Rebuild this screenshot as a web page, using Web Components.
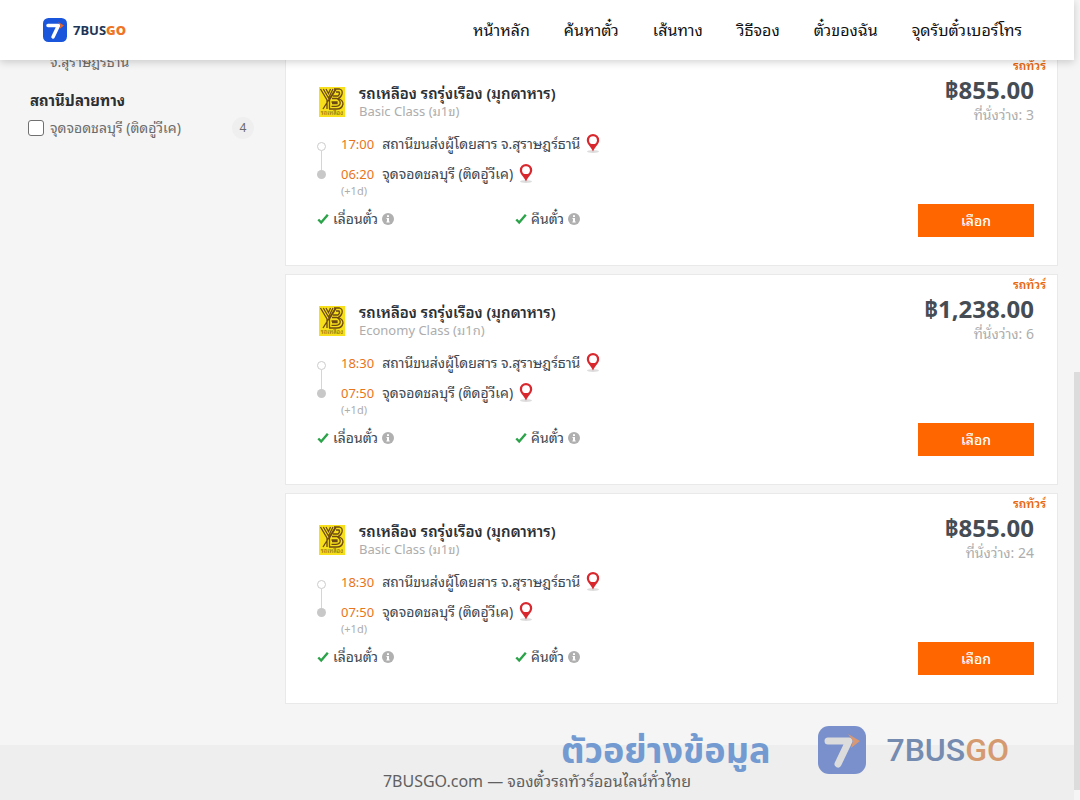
<!DOCTYPE html>
<html lang="th">
<head>
<meta charset="utf-8">
<meta name="viewport" content="width=device-width, initial-scale=1">
<title>7BUSGO</title>
<style>
html { scrollbar-width: none; }
body { margin: 0; background: #f5f5f5; color: #40464d; font: 14px/20px "Noto Sans", "Noto Sans Thai Looped", Loma, Waree, Garuda, "Noto Sans Thai", sans-serif; }
</style>
</head>
<body>
<app-shell>
  <site-header slot="header">
    <a href="#home">หน้าหลัก</a>
    <a href="#search">ค้นหาตั๋ว</a>
    <a href="#routes">เส้นทาง</a>
    <a href="#how">วิธีจอง</a>
    <a href="#tickets">ตั๋วของฉัน</a>
    <a href="#pickup">จุดรับตั๋วเบอร์โทร</a>
  </site-header>
  <filter-panel slot="filters" count="4">
    <span slot="origin">จ.สุราษฎร์ธานี</span>
    <span slot="heading">สถานีปลายทาง</span>
    <span slot="option">จุดจอดชลบุรี (ติดอู่วีเค)</span>
  </filter-panel>
  <trip-card grade="Basic Class (ม1ข)" depart="17:00" arrive="06:20" price="฿855.00" seats="3">รถเหลือง รถรุ่งเรือง (มุกดาหาร)</trip-card>
  <trip-card grade="Economy Class (ม1ก)" depart="18:30" arrive="07:50" price="฿1,238.00" seats="6">รถเหลือง รถรุ่งเรือง (มุกดาหาร)</trip-card>
  <trip-card grade="Basic Class (ม1ข)" depart="18:30" arrive="07:50" price="฿855.00" seats="24">รถเหลือง รถรุ่งเรือง (มุกดาหาร)</trip-card>
  <site-footer slot="footer">7BUSGO.com — จองตั๋วรถทัวร์ออนไลน์ทั่วไทย</site-footer>
  <sample-mark slot="mark">ตัวอย่างข้อมูล</sample-mark>
</app-shell>
<script>
class BaseElement extends HTMLElement {
  connectedCallback() {
    if (!this.shadowRoot) this.attachShadow({ mode: 'open' }).innerHTML = this.render();
  }
  attr(name) { return this.getAttribute(name) || ''; }
}

customElements.define('app-shell', class extends BaseElement {
  render() { return `
    <style>
      :host { display: block; position: relative; padding-right: 6px; overflow: hidden; }
      .columns { display: grid; grid-template-columns: 285px minmax(0, 1fr); padding-right: 16px; margin-top: -5px; }
      .list { display: flex; flex-direction: column; gap: 8px; }
      .rail { position: absolute; right: 0; top: 0; bottom: 0; width: 6px; background: #f5f5f5; }
      .thumb { position: absolute; inset: 372px 0 10px 0; background: #dcdcdc; }
    </style>
    <slot name="header"></slot>
    <div class="columns">
      <slot name="filters"></slot>
      <main class="list"><slot></slot></main>
    </div>
    <slot name="footer"></slot>
    <slot name="mark"></slot>
    <div class="rail"><div class="thumb"></div></div>`; }
});

customElements.define('brand-icon', class extends BaseElement {
  render() { return `
    <style>:host { display: block; flex: none; width: 24px; height: 24px; } svg { display: block; width: 100%; height: 100%; }</style>
    <svg viewBox="0 0 48 48" aria-hidden="true">
      <rect width="48" height="48" rx="11" fill="var(--brand-blue, #1a56db)"/>
      <path d="M10 15H31L20 38" fill="none" stroke="var(--brand-white, #fff)" stroke-width="7" stroke-linecap="round" stroke-linejoin="round"/>
      <path d="M30 8L42 15L33 22L35 15Z" fill="var(--brand-orange, #f0641e)"/>
    </svg>`; }
});

customElements.define('site-header', class extends BaseElement {
  render() { return `
    <style>
      :host { display: flex; align-items: center; justify-content: space-between; position: relative; z-index: 2;
        height: 60px; padding: 0 52px 0 43px; background: #fff; box-shadow: 0 2px 8px rgba(0,0,0,.18); box-sizing: border-box; }
      .brand { display: flex; align-items: center; gap: 6px; color: #1d3557; font: 700 13px/20px "Noto Sans", sans-serif; text-decoration: none; }
      b { color: #ee7526; }
      nav { display: flex; gap: 34px; font-size: 16px; line-height: 24px; }
      ::slotted(a) { color: #111; text-decoration: none; white-space: nowrap; }
    </style>
    <a class="brand" href="#home"><brand-icon></brand-icon><span>7BUS<b>GO</b></span></a>
    <nav><slot></slot></nav>`; }
});

customElements.define('filter-panel', class extends BaseElement {
  render() { return `
    <style>
      :host { display: block; padding: 0 31px 0 28px; color: #6b6b6b; }
      .origin { padding-left: 22px; line-height: 14px; }
      h2 { margin: 20px 0 6px 2px; font-size: 15px; line-height: 22px; color: #2b2f33; }
      label { display: flex; align-items: center; gap: 6px; line-height: 20px; }
      input { appearance: none; flex: none; box-sizing: border-box; width: 16px; height: 16px; margin: 0; border: 1px solid #707070; border-radius: 3px; background: #fff; }
      .count { margin-left: auto; width: 22px; border-radius: 11px; background: #efefef; text-align: center; font-size: 12px; line-height: 22px; }
    </style>
    <div class="origin"><slot name="origin"></slot></div>
    <h2><slot name="heading"></slot></h2>
    <label><input type="checkbox"><slot name="option"></slot><span class="count">${this.attr('count')}</span></label>`; }
});

customElements.define('operator-logo', class extends BaseElement {
  render() { return `
    <style>:host { display: block; width: 26px; height: 30px; } svg { display: block; }</style>
    <svg width="26" height="30" viewBox="0 0 26 30" aria-hidden="true">
      <rect width="26" height="30" fill="#f7e01b"/>
      <g fill="none" stroke="#6e4a12" stroke-width="1.3">
        <path d="M1.500 2L8 13V22M4.300 2L9.500 11L14 2M7 2L9.500 6.500L11.500 2M4 22L16.500 2M10.500 22V13L17 2.500"/>
        <path d="M15 2H20.500Q24 3 23 7Q22 10.500 19 11.500Q24 13 24 17Q23 22 18 22H10M17 5H20Q21.500 7 19 9H14M13 11.500H18Q22 14 21 17Q20 19.300 17 19.300H12.500M12.500 15H18V16.500H13"/>
      </g>
      <text x="13" y="28" text-anchor="middle" font-size="6" fill="#8a6512">รถเหลือง</text>
    </svg>`; }
});

customElements.define('map-pin', class extends BaseElement {
  render() { return `
    <style>:host { display: block; } button { display: block; padding: 0; border: 0; background: none; } svg { display: block; }</style>
    <button type="button" aria-label="แผนที่"><svg width="14" height="20" viewBox="0 0 14 20">
      <ellipse cx="7" cy="17.500" rx="6" ry="1.500" fill="#ddd"/>
      <path d="M7 0A6.200 6.200 0 0 0 .8 6.200C.8 10 5 12.500 7 17.500C9 12.500 13.200 10 13.200 6.200A6.200 6.200 0 0 0 7 0Z" fill="#d9272e"/>
      <circle cx="7" cy="6.200" r="3.900" fill="#fff"/>
    </svg></button>`; }
});

customElements.define('trip-perk', class extends BaseElement {
  render() { return `
    <style>:host { display: flex; align-items: center; gap: 4px; line-height: 20px; } svg { display: block; flex: none; }</style>
    <svg width="12" height="12" viewBox="0 0 12 12" aria-hidden="true"><path d="M1.300 6.500L4.200 9.500L10.800 1.800" fill="none" stroke="#2ba349" stroke-width="2.400"/></svg>
    <slot></slot>
    <svg width="12" height="12" viewBox="0 0 12 12" aria-hidden="true"><circle cx="6" cy="6" r="6" fill="#b0b0b0"/><path d="M5 2.300h2v1.600H5zM4.500 5H7v3.500h.7v1H4.400v-1H5V6h-.5z" fill="#fff"/></svg>`; }
});

customElements.define('trip-card', class extends BaseElement {
  render() { return `
    <style>
      :host { display: flex; justify-content: space-between; position: relative; box-sizing: border-box;
        padding: 28px 23px 28px 31px; background: #fff; border: 1px solid #e9e9e9; }
      .kind { position: absolute; top: 0; right: 11px; height: 14px; overflow: hidden; color: #e8670c; font-size: 12px; line-height: 19px; font-weight: 600; }
      .head { display: flex; align-items: center; gap: 14px; padding-left: 2px; }
      h3 { margin: 0; font-size: 15px; line-height: 18px; font-weight: 600; color: #2b2f33; }
      .grade { font-size: 13px; line-height: 18px; color: #adadad; }
      .route { display: grid; grid-template-columns: 9px auto 1fr; column-gap: 8px; row-gap: 6px; margin-top: 12px; line-height: 24px; }
      .track { grid-row: 1 / 3; display: flex; flex-direction: column; align-items: center; padding: 10px 0 7px; }
      .track i { box-sizing: border-box; width: 9px; height: 9px; border-radius: 50%; background: #c8c8c8; }
      .track i:first-child { border: 1px solid #ccc; background: #fff; }
      .track u { flex: 1; width: 1px; background: #d5d5d5; }
      time { padding-left: 7px; text-align: right; color: #e8751a; font-size: 13px; }
      .stop { display: flex; align-items: center; gap: 6px; white-space: nowrap; }
      .next { padding-left: 24px; color: #adadad; font-size: 11px; line-height: 10px; }
      .perks { display: grid; grid-template-columns: 198px 198px; margin-top: 13px; }
      .buy { display: flex; flex-direction: column; align-items: flex-end; }
      .price { margin-top: -9px; color: #454c54; font-size: 24px; line-height: 30px; font-weight: 700; }
      .seats { color: #adadad; line-height: 20px; }
      .buy button { width: 116px; height: 33px; margin-top: 79px; padding: 0; border: 0; background: #f60; color: #fff; font: inherit; font-weight: 500; }
    </style>
    <span class="kind">รถทัวร์</span>
    <div>
      <div class="head"><operator-logo></operator-logo><div><h3><slot></slot></h3><div class="grade">${this.attr('grade')}</div></div></div>
      <div class="route">
        <div class="track"><i></i><u></u><i></i></div>
        <time>${this.attr('depart')}</time><div class="stop">สถานีขนส่งผู้โดยสาร จ.สุราษฎร์ธานี<map-pin></map-pin></div>
        <time>${this.attr('arrive')}</time><div class="stop">จุดจอดชลบุรี (ติดอู่วีเค)<map-pin></map-pin></div>
      </div>
      <div class="next">(+1d)</div>
      <div class="perks"><trip-perk>เลื่อนตั๋ว</trip-perk><trip-perk>คืนตั๋ว</trip-perk></div>
    </div>
    <div class="buy">
      <div class="price">${this.attr('price')}</div>
      <div class="seats">ที่นั่งว่าง: ${this.attr('seats')}</div>
      <button type="button">เลือก</button>
    </div>`; }
});

customElements.define('site-footer', class extends BaseElement {
  render() { return `
    <style>:host { display: block; margin-top: 41px; padding: 24px 16px 7px; background: #eee; color: #606060; text-align: center; font-size: 16px; line-height: 24px; }</style>
    <footer><slot></slot></footer>`; }
});

customElements.define('sample-mark', class extends BaseElement {
  render() { return `
    <style>
      :host { display: flex; align-items: center; position: absolute; right: 71px; bottom: 26px; pointer-events: none;
        color: #739bd1; font: 700 36px/48px "Noto Sans", "Noto Sans Thai", sans-serif; white-space: nowrap;
        --brand-blue: #7990cc; --brand-white: #dcdcdc; --brand-orange: #d89873; }
      brand-icon { width: 48px; height: 48px; margin: 0 20px 0 48px; }
      .name { font: 500 32px/48px Roboto, sans-serif; color: #758bb0; }
      b { font-weight: 500; color: #d59a70; }
    </style>
    <slot></slot><brand-icon></brand-icon><span class="name">7BUS<b>GO</b></span>`; }
});
</script>
</body>
</html>
